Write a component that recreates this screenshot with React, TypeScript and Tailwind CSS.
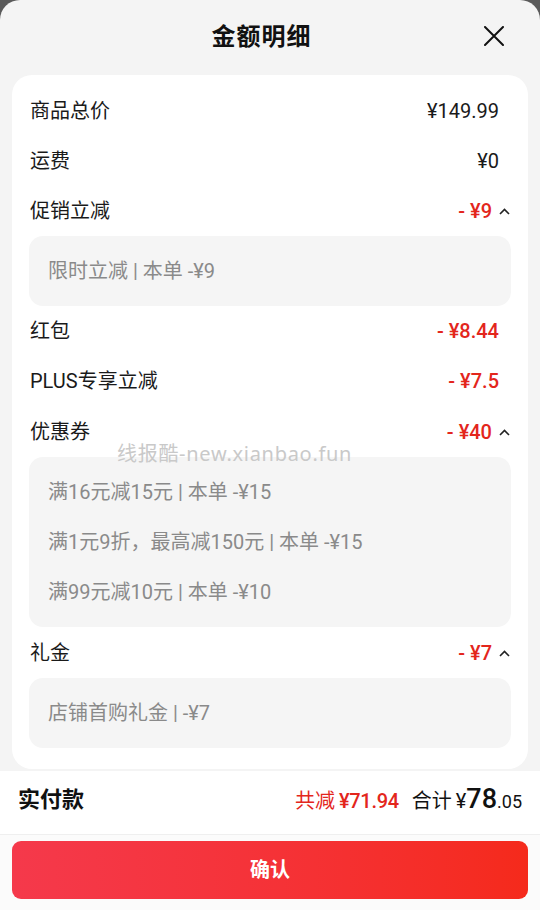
type Row = {
  label: string;
  value: string;
  red?: boolean;
  arrow?: boolean;
  details?: string[];
};

const rows: Row[] = [
  { label: "商品总价", value: "¥149.99" },
  { label: "运费", value: "¥0" },
  { label: "促销立减", value: "- ¥9", red: true, arrow: true, details: ["限时立减 | 本单 -¥9"] },
  { label: "红包", value: "- ¥8.44", red: true },
  { label: "PLUS专享立减", value: "- ¥7.5", red: true },
  {
    label: "优惠券",
    value: "- ¥40",
    red: true,
    arrow: true,
    details: ["满16元减15元 | 本单 -¥15", "满1元9折，最高减150元 | 本单 -¥15", "满99元减10元 | 本单 -¥10"],
  },
  { label: "礼金", value: "- ¥7", red: true, arrow: true, details: ["店铺首购礼金 | -¥7"] },
];

const font = "font-['Roboto','Noto_Sans_CJK_SC',sans-serif]";

const ChevronUp = () => (
  <svg width="11" height="7" viewBox="0 0 11 7" className="ml-[7px]">
    <path d="M1 6 L5.5 1.5 L10 6" fill="none" stroke="#222" strokeWidth="1.6" />
  </svg>
);

const CloseIcon = () => (
  <svg width="20" height="20" viewBox="0 0 20 20" className="absolute right-[36px] top-[26px]">
    <path d="M1 1 L19 19 M19 1 L1 19" stroke="#111" strokeWidth="2" strokeLinecap="round" />
  </svg>
);

const App = () => {
  return (
    <div className={`w-[540px] h-[910px] bg-[#5a5a5a] overflow-hidden ${font}`}>
      <div className="relative w-full h-full bg-[#f4f4f4] rounded-t-[20px] flex flex-col">
        {/* header */}
        <div className="relative h-[75px] flex items-start justify-center pt-[19px] pr-[17px]">
          <span className="text-[24px] leading-[36px] font-bold text-[#111] tracking-[1px]">金额明细</span>
          <CloseIcon />
        </div>

        {/* detail card */}
        <div className="mx-[12px] bg-white rounded-[20px] px-[17px] pt-[11px] pb-[21px]">
          {rows.map((row, i) => (
            <div key={row.label} className={i >= 5 ? "pt-[1px]" : ""}>
              <div className="h-[50px] flex items-center justify-between">
                <span className="pl-[1px] text-[20px] text-[#1a1a1a]">{row.label}</span>
                <div className={`flex items-center ${row.arrow ? "pr-[1px]" : "pr-[12px]"}`}>
                  <span
                    className={`text-[20px] ${row.red ? "text-[#e3261c] font-medium" : "text-[#1a1a1a]"}`}
                  >
                    {row.value}
                  </span>
                  {row.arrow && <ChevronUp />}
                </div>
              </div>
              {row.details && (
                <div className="bg-[#f5f5f5] rounded-[14px] px-[19px] py-[10px]">
                  {row.details.map((d) => (
                    <div key={d} className="h-[50px] flex items-center text-[20px] text-[#8a8a8a]">
                      {d}
                    </div>
                  ))}
                </div>
              )}
            </div>
          ))}
        </div>

        {/* watermark */}
        <span className="absolute left-[117px] top-[439px] text-[20px] text-[#c9c9c9] tracking-[0.7px] font-['Noto_Sans','Noto_Sans_CJK_SC',sans-serif]">
          线报酷-new.xianbao.fun
        </span>

        {/* total bar */}
        <div className="mt-[2px] bg-white h-[63px] flex items-center justify-between pl-[18px] pr-[18px] pb-[6px]">
          <span className="text-[22px] font-bold text-[#111]">实付款</span>
          <div className="flex items-baseline">
            <span className="text-[20px] text-[#e3261c]">共减</span>
            <span className="ml-[4px] text-[20px] font-medium text-[#e3261c] tracking-[-0.3px]">¥71.94</span>
            <span className="ml-[13px] text-[20px] text-[#111]">合计</span>
            <span className="ml-[4px] text-[20px] text-[#111]">¥</span>
            <span className="text-[27px] font-medium text-[#111]">78</span>
            <span className="text-[18px] text-[#111]">.05</span>
          </div>
        </div>

        {/* confirm */}
        <div className="flex-1 bg-[#fbfbfb] border-t border-[#efefef] px-[12px] pt-[6px]">
          <button className="w-full h-[58px] rounded-[9px] bg-gradient-to-r from-[#f5394b] to-[#f52a1b] text-white text-[20px] font-bold">
            确认
          </button>
        </div>
      </div>
    </div>
  );
};

export default App;
